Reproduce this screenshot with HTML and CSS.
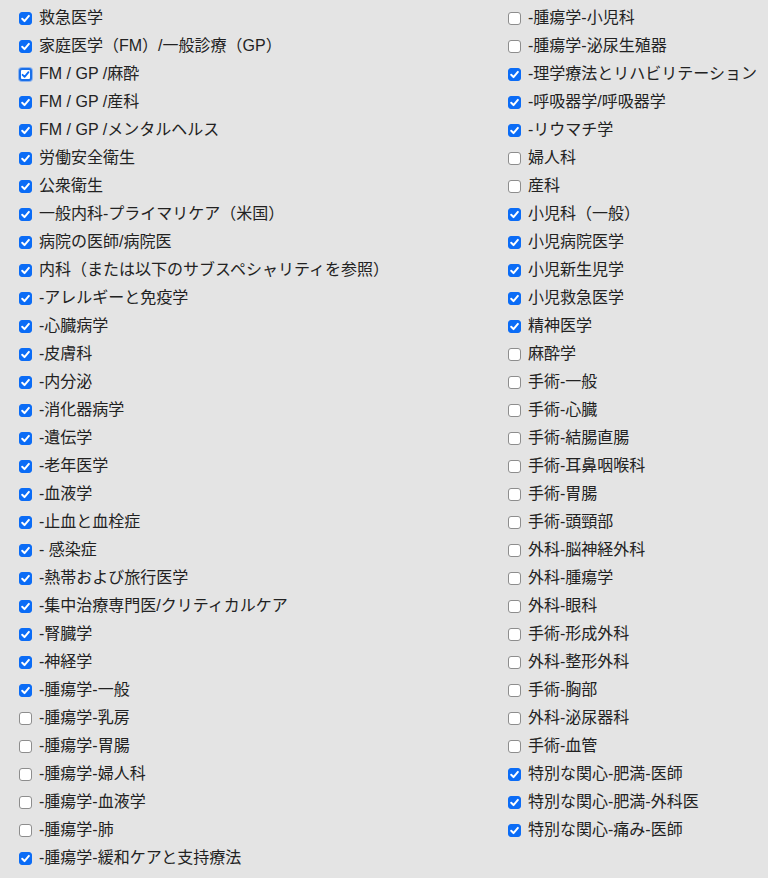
FILE: index.html
```html
<!DOCTYPE html>
<html lang="ja">
<head>
<meta charset="utf-8">
<title>専門分野</title>
<link rel="stylesheet" href="styles.css">
</head>
<body>
<div class="cols">
  <ul class="list">
    <li class="item"><span class="box on"><svg viewBox="0 0 13 13"><path d="M3.2 6.8 L5.5 9.1 L9.9 3.9"/></svg></span><span class="txt">救急医学</span></li>
    <li class="item"><span class="box on"><svg viewBox="0 0 13 13"><path d="M3.2 6.8 L5.5 9.1 L9.9 3.9"/></svg></span><span class="txt">家庭医学（FM）/一般診療（GP）</span></li>
    <li class="item"><span class="box on focus"><svg viewBox="0 0 13 13"><path d="M3.6 6.8 L5.6 8.8 L9.5 4.2"/></svg></span><span class="txt">FM / GP /麻酔</span></li>
    <li class="item"><span class="box on"><svg viewBox="0 0 13 13"><path d="M3.2 6.8 L5.5 9.1 L9.9 3.9"/></svg></span><span class="txt">FM / GP /産科</span></li>
    <li class="item"><span class="box on"><svg viewBox="0 0 13 13"><path d="M3.2 6.8 L5.5 9.1 L9.9 3.9"/></svg></span><span class="txt">FM / GP /メンタルヘルス</span></li>
    <li class="item"><span class="box on"><svg viewBox="0 0 13 13"><path d="M3.2 6.8 L5.5 9.1 L9.9 3.9"/></svg></span><span class="txt">労働安全衛生</span></li>
    <li class="item"><span class="box on"><svg viewBox="0 0 13 13"><path d="M3.2 6.8 L5.5 9.1 L9.9 3.9"/></svg></span><span class="txt">公衆衛生</span></li>
    <li class="item"><span class="box on"><svg viewBox="0 0 13 13"><path d="M3.2 6.8 L5.5 9.1 L9.9 3.9"/></svg></span><span class="txt">一般内科-プライマリケア（米国）</span></li>
    <li class="item"><span class="box on"><svg viewBox="0 0 13 13"><path d="M3.2 6.8 L5.5 9.1 L9.9 3.9"/></svg></span><span class="txt">病院の医師/病院医</span></li>
    <li class="item"><span class="box on"><svg viewBox="0 0 13 13"><path d="M3.2 6.8 L5.5 9.1 L9.9 3.9"/></svg></span><span class="txt">内科（または以下のサブスペシャリティを参照）</span></li>
    <li class="item"><span class="box on"><svg viewBox="0 0 13 13"><path d="M3.2 6.8 L5.5 9.1 L9.9 3.9"/></svg></span><span class="txt">-アレルギーと免疫学</span></li>
    <li class="item"><span class="box on"><svg viewBox="0 0 13 13"><path d="M3.2 6.8 L5.5 9.1 L9.9 3.9"/></svg></span><span class="txt">-心臓病学</span></li>
    <li class="item"><span class="box on"><svg viewBox="0 0 13 13"><path d="M3.2 6.8 L5.5 9.1 L9.9 3.9"/></svg></span><span class="txt">-皮膚科</span></li>
    <li class="item"><span class="box on"><svg viewBox="0 0 13 13"><path d="M3.2 6.8 L5.5 9.1 L9.9 3.9"/></svg></span><span class="txt">-内分泌</span></li>
    <li class="item"><span class="box on"><svg viewBox="0 0 13 13"><path d="M3.2 6.8 L5.5 9.1 L9.9 3.9"/></svg></span><span class="txt">-消化器病学</span></li>
    <li class="item"><span class="box on"><svg viewBox="0 0 13 13"><path d="M3.2 6.8 L5.5 9.1 L9.9 3.9"/></svg></span><span class="txt">-遺伝学</span></li>
    <li class="item"><span class="box on"><svg viewBox="0 0 13 13"><path d="M3.2 6.8 L5.5 9.1 L9.9 3.9"/></svg></span><span class="txt">-老年医学</span></li>
    <li class="item"><span class="box on"><svg viewBox="0 0 13 13"><path d="M3.2 6.8 L5.5 9.1 L9.9 3.9"/></svg></span><span class="txt">-血液学</span></li>
    <li class="item"><span class="box on"><svg viewBox="0 0 13 13"><path d="M3.2 6.8 L5.5 9.1 L9.9 3.9"/></svg></span><span class="txt">-止血と血栓症</span></li>
    <li class="item"><span class="box on"><svg viewBox="0 0 13 13"><path d="M3.2 6.8 L5.5 9.1 L9.9 3.9"/></svg></span><span class="txt">- 感染症</span></li>
    <li class="item"><span class="box on"><svg viewBox="0 0 13 13"><path d="M3.2 6.8 L5.5 9.1 L9.9 3.9"/></svg></span><span class="txt">-熱帯および旅行医学</span></li>
    <li class="item"><span class="box on"><svg viewBox="0 0 13 13"><path d="M3.2 6.8 L5.5 9.1 L9.9 3.9"/></svg></span><span class="txt">-集中治療専門医/クリティカルケア</span></li>
    <li class="item"><span class="box on"><svg viewBox="0 0 13 13"><path d="M3.2 6.8 L5.5 9.1 L9.9 3.9"/></svg></span><span class="txt">-腎臓学</span></li>
    <li class="item"><span class="box on"><svg viewBox="0 0 13 13"><path d="M3.2 6.8 L5.5 9.1 L9.9 3.9"/></svg></span><span class="txt">-神経学</span></li>
    <li class="item"><span class="box on"><svg viewBox="0 0 13 13"><path d="M3.2 6.8 L5.5 9.1 L9.9 3.9"/></svg></span><span class="txt">-腫瘍学-一般</span></li>
    <li class="item"><span class="box"></span><span class="txt">-腫瘍学-乳房</span></li>
    <li class="item"><span class="box"></span><span class="txt">-腫瘍学-胃腸</span></li>
    <li class="item"><span class="box"></span><span class="txt">-腫瘍学-婦人科</span></li>
    <li class="item"><span class="box"></span><span class="txt">-腫瘍学-血液学</span></li>
    <li class="item"><span class="box"></span><span class="txt">-腫瘍学-肺</span></li>
    <li class="item"><span class="box on"><svg viewBox="0 0 13 13"><path d="M3.2 6.8 L5.5 9.1 L9.9 3.9"/></svg></span><span class="txt">-腫瘍学-緩和ケアと支持療法</span></li>
  </ul>
  <ul class="list">
    <li class="item"><span class="box"></span><span class="txt">-腫瘍学-小児科</span></li>
    <li class="item"><span class="box"></span><span class="txt">-腫瘍学-泌尿生殖器</span></li>
    <li class="item"><span class="box on"><svg viewBox="0 0 13 13"><path d="M3.2 6.8 L5.5 9.1 L9.9 3.9"/></svg></span><span class="txt">-理学療法とリハビリテーション</span></li>
    <li class="item"><span class="box on"><svg viewBox="0 0 13 13"><path d="M3.2 6.8 L5.5 9.1 L9.9 3.9"/></svg></span><span class="txt">-呼吸器学/呼吸器学</span></li>
    <li class="item"><span class="box on"><svg viewBox="0 0 13 13"><path d="M3.2 6.8 L5.5 9.1 L9.9 3.9"/></svg></span><span class="txt">-リウマチ学</span></li>
    <li class="item"><span class="box"></span><span class="txt">婦人科</span></li>
    <li class="item"><span class="box"></span><span class="txt">産科</span></li>
    <li class="item"><span class="box on"><svg viewBox="0 0 13 13"><path d="M3.2 6.8 L5.5 9.1 L9.9 3.9"/></svg></span><span class="txt">小児科（一般）</span></li>
    <li class="item"><span class="box on"><svg viewBox="0 0 13 13"><path d="M3.2 6.8 L5.5 9.1 L9.9 3.9"/></svg></span><span class="txt">小児病院医学</span></li>
    <li class="item"><span class="box on"><svg viewBox="0 0 13 13"><path d="M3.2 6.8 L5.5 9.1 L9.9 3.9"/></svg></span><span class="txt">小児新生児学</span></li>
    <li class="item"><span class="box on"><svg viewBox="0 0 13 13"><path d="M3.2 6.8 L5.5 9.1 L9.9 3.9"/></svg></span><span class="txt">小児救急医学</span></li>
    <li class="item"><span class="box on"><svg viewBox="0 0 13 13"><path d="M3.2 6.8 L5.5 9.1 L9.9 3.9"/></svg></span><span class="txt">精神医学</span></li>
    <li class="item"><span class="box"></span><span class="txt">麻酔学</span></li>
    <li class="item"><span class="box"></span><span class="txt">手術-一般</span></li>
    <li class="item"><span class="box"></span><span class="txt">手術-心臓</span></li>
    <li class="item"><span class="box"></span><span class="txt">手術-結腸直腸</span></li>
    <li class="item"><span class="box"></span><span class="txt">手術-耳鼻咽喉科</span></li>
    <li class="item"><span class="box"></span><span class="txt">手術-胃腸</span></li>
    <li class="item"><span class="box"></span><span class="txt">手術-頭頸部</span></li>
    <li class="item"><span class="box"></span><span class="txt">外科-脳神経外科</span></li>
    <li class="item"><span class="box"></span><span class="txt">外科-腫瘍学</span></li>
    <li class="item"><span class="box"></span><span class="txt">外科-眼科</span></li>
    <li class="item"><span class="box"></span><span class="txt">手術-形成外科</span></li>
    <li class="item"><span class="box"></span><span class="txt">外科-整形外科</span></li>
    <li class="item"><span class="box"></span><span class="txt">手術-胸部</span></li>
    <li class="item"><span class="box"></span><span class="txt">外科-泌尿器科</span></li>
    <li class="item"><span class="box"></span><span class="txt">手術-血管</span></li>
    <li class="item"><span class="box on"><svg viewBox="0 0 13 13"><path d="M3.2 6.8 L5.5 9.1 L9.9 3.9"/></svg></span><span class="txt">特別な関心-肥満-医師</span></li>
    <li class="item"><span class="box on"><svg viewBox="0 0 13 13"><path d="M3.2 6.8 L5.5 9.1 L9.9 3.9"/></svg></span><span class="txt">特別な関心-肥満-外科医</span></li>
    <li class="item"><span class="box on"><svg viewBox="0 0 13 13"><path d="M3.2 6.8 L5.5 9.1 L9.9 3.9"/></svg></span><span class="txt">特別な関心-痛み-医師</span></li>
  </ul>
</div>
</body>
</html>
```
FILE: styles.css
```css
html, body {
  margin: 0;
  padding: 0;
  background: #e4e4e4;
}
body {
  font-family: "Liberation Sans", "Noto Sans CJK JP", sans-serif;
  font-size: 16px;
  color: #222;
}
.cols {
  display: grid;
  grid-template-columns: 489px 1fr;
  padding-top: 4px;
}
.list {
  list-style: none;
  margin: 0;
  padding: 0 0 0 19px;
}
.item {
  display: flex;
  align-items: center;
  height: 28px;
  white-space: nowrap;
}
.box {
  box-sizing: border-box;
  width: 13px;
  height: 13px;
  flex: none;
  margin-right: 7px;
  margin-top: 1px;
  border: 1px solid #8d8d8d;
  border-radius: 3px;
  background: #fff;
  display: flex;
}
.box svg {
  width: 13px;
  height: 13px;
  margin: -1px;
}
.box svg path {
  fill: none;
  stroke: #fff;
  stroke-width: 2;
  stroke-linecap: round;
  stroke-linejoin: round;
}
.box.on {
  background: #0b6cf6;
  border-color: #0b6cf6;
}
.box.on.focus {
  background: #fff;
  border: 2px solid #1a6fe8;
  box-shadow: 0 0 0 1px #8fb5ef;
}
.box.on.focus svg {
  margin: -2px;
}
.box.on.focus svg path {
  stroke: #0b6cf6;
  stroke-width: 1.8;
}
.txt {
  line-height: 20px;
}
```
